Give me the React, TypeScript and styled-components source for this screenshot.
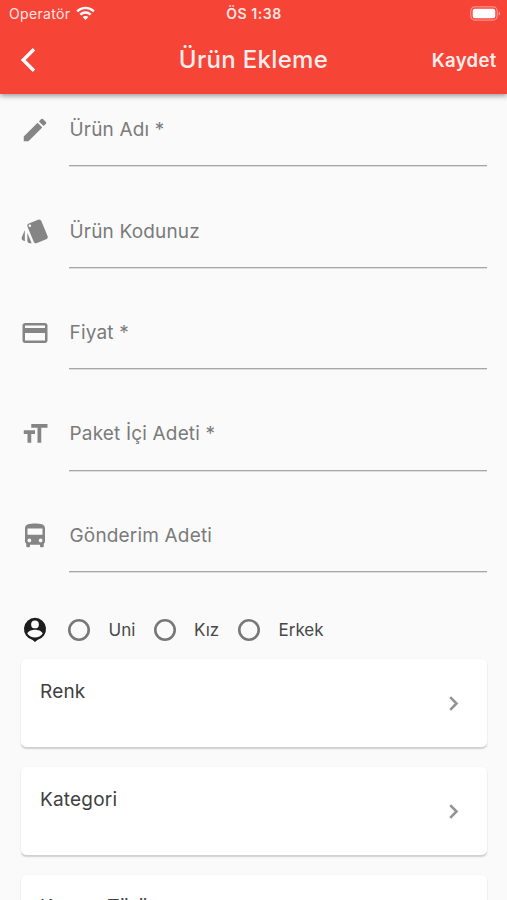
import React from 'react';
import styled, { createGlobalStyle } from 'styled-components';
import { MdEdit, MdStyle, MdCreditCard, MdFormatSize, MdDirectionsBus } from 'react-icons/md';

const GlobalStyle = createGlobalStyle`
  * { box-sizing: border-box; }
  html, body { margin: 0; padding: 0; background: #fafafa; }
  body { font-family: Inter, "Liberation Sans", sans-serif; overflow: hidden; }
`;

const Screen = styled.div`
  width: 507px;
  height: 900px;
  overflow: hidden;
  background: #fafafa;
  display: flex;
  flex-direction: column;
`;

const Header = styled.header`
  flex: none;
  height: 94px;
  background: #f64437;
  color: #fff;
  box-shadow: 0 2px 5px rgba(0, 0, 0, 0.38);
  z-index: 1;
`;

const StatusBar = styled.div`
  height: 27px;
  display: grid;
  grid-template-columns: 1fr auto 1fr;
  align-items: center;
  padding: 0 8px 0 9px;
  color: #ffe6e3;
  line-height: 27px;
`;

const Carrier = styled.div`
  display: flex;
  align-items: center;
  gap: 6px;
  font-size: 14px;
  letter-spacing: 0.32px;
`;

const Clock = styled.div`
  font-size: 14px;
  font-weight: 600;
  letter-spacing: 0.55px;
`;

const BatterySlot = styled.div`
  display: flex;
  justify-content: flex-end;
  margin-right: -2px;
`;

const NavBar = styled.div`
  height: 65px;
  display: grid;
  grid-template-columns: 1fr auto 1fr;
  align-items: center;
  padding: 0 11px 0 20px;
`;

const BackButton = styled.button`
  justify-self: start;
  display: flex;
  padding: 0;
  border: 0;
  background: none;
  color: #fff;
`;

const Title = styled.h1`
  margin: 0 9px 0 0;
  font-size: 24px;
  font-weight: 500;
  line-height: 30px;
  letter-spacing: 0.33px;
  color: #ffeeec;
`;

const SaveButton = styled.button`
  justify-self: end;
  padding: 0;
  border: 0;
  background: none;
  color: #ffeeec;
  font: 600 18.5px/24px Inter, sans-serif;
  letter-spacing: 0.3px;
  margin-right: -0.5px;
`;

const Form = styled.main`
  flex: 1;
  min-height: 0;
  padding-right: 20px;
`;

const FieldRow = styled.label`
  display: flex;
  height: 101.4px;
  padding-left: 20px;
`;

const FieldIcon = styled.span`
  width: 49px;
  padding-top: 21px;
  color: #858585;
  svg { display: block; width: 30px; height: 30px; }
`;

const FieldBody = styled.span`
  flex: 1;
  height: 72.4px;
  border-bottom: 1px solid #a6a6a6;
  box-shadow: 0 1px 0 #dedede;
`;

const FieldLabel = styled.span`
  display: block;
  padding: 22.3px 0 0 0.5px;
  font-size: 19px;
  line-height: 28px;
  letter-spacing: 0.17px;
  color: #7b7b7b;
`;

const GenderRow = styled.div`
  display: flex;
  align-items: center;
  height: 58px;
  padding-left: 20px;
`;

const PersonSlot = styled.span`
  width: 48px;
  display: flex;
`;

const RadioOption = styled.label<{ $width: number }>`
  display: flex;
  align-items: center;
  gap: 18.5px;
  width: ${p => p.$width}px;
  font-size: 17px;
  letter-spacing: 0;
  color: #484848;
`;

const RadioRing = styled.span`
  width: 22px;
  height: 22px;
  box-shadow: inset 0 0 0 2.6px #777;
  border-radius: 50%;
`;

const Cards = styled.div`
  display: flex;
  flex-direction: column;
  gap: 20.4px;
  padding-left: 21px;
`;

const Card = styled.button`
  display: flex;
  flex: none;
  justify-content: space-between;
  height: 87.7px;
  padding: 20px 27.5px 0 19px;
  border: 0;
  border-radius: 5px;
  background: #fff;
  box-shadow: 0 1.5px 1.5px rgba(0, 0, 0, 0.17), 0 0 2px rgba(0, 0, 0, 0.03);
  text-align: left;
  font: 400 19px/26px Inter, sans-serif;
  letter-spacing: 0.2px;
  color: #404040;
  svg { display: block; margin-top: 16px; }
  &:last-child { padding-top: 19px; }
`;

const WifiIcon = () => (
  <svg width="19" height="15" viewBox="0 0 19 15" fill="none" stroke="#fff" strokeWidth="2.3">
    <path d="M1.2 5.3C6 .7 13 .7 17.8 5.3" />
    <path d="M4.3 8.6C7.3 5.8 11.7 5.8 14.7 8.6" />
    <path d="M9.5 14 6.6 11.1C8.2 9.6 10.8 9.6 12.4 11.1Z" fill="#fff" stroke="none" />
  </svg>
);

const BatteryIcon = () => (
  <svg width="31" height="15" viewBox="0 0 31 15" fill="none">
    <rect x=".8" y=".9" width="26.4" height="13.2" rx="4" stroke="#fff" strokeOpacity=".42" strokeWidth="1.2" />
    <rect x="2.7" y="2.8" width="22.6" height="9.4" rx="2.2" fill="#fff" />
    <path d="M28.7 5.4c2 .8 2 3.4 0 4.2Z" fill="#fff" fillOpacity=".5" />
  </svg>
);

const BackIcon = () => (
  <svg width="16" height="26" viewBox="0 0 16 26" fill="none" stroke="currentColor" strokeWidth="3.4">
    <path d="M14 2.2 3.2 13 14 23.8" />
  </svg>
);

const PersonPinIcon = () => (
  <svg width="30" height="30" viewBox="0 0 30 30">
    <path
      fill="#1d1d1d"
      fillRule="evenodd"
      d="M15 2.8a11.2 11.2 0 0 0-2.4 22.1L15 27l2.4-2.1A11.2 11.2 0 0 0 15 2.8Zm0 2.7a3.9 3.9 0 1 1 0 7.8 3.9 3.9 0 0 1 0-7.8ZM7.3 18.6c1.2-2.8 5.1-3.8 7.7-3.8s6.5 1 7.7 3.8c-1.7 2.5-4.5 4-7.7 4s-6-1.5-7.7-4Z"
    />
  </svg>
);

const ChevronIcon = () => (
  <svg width="12" height="17" viewBox="0 0 12 17" fill="none" stroke="#949494" strokeWidth="2.6">
    <path d="M2.2 2.2 8.5 8.5 2.2 14.8" />
  </svg>
);

const fields = [
  { label: 'Ürün Adı *', Icon: MdEdit },
  { label: 'Ürün Kodunuz', Icon: MdStyle },
  { label: 'Fiyat *', Icon: MdCreditCard },
  { label: 'Paket İçi Adeti *', Icon: MdFormatSize },
  { label: 'Gönderim Adeti', Icon: MdDirectionsBus },
];

const genders = [
  { label: 'Uni', width: 85.5 },
  { label: 'Kız', width: 84.5 },
  { label: 'Erkek', width: 100 },
];

const sections = ['Renk', 'Kategori', 'Kumaş Türü'];

export default function App() {
  return (
    <Screen>
      <GlobalStyle />
      <Header>
        <StatusBar>
          <Carrier>Operatör <WifiIcon /></Carrier>
          <Clock>ÖS 1:38</Clock>
          <BatterySlot><BatteryIcon /></BatterySlot>
        </StatusBar>
        <NavBar>
          <BackButton aria-label="Geri"><BackIcon /></BackButton>
          <Title>Ürün Ekleme</Title>
          <SaveButton>Kaydet</SaveButton>
        </NavBar>
      </Header>
      <Form>
        {fields.map(({ label, Icon }) => (
          <FieldRow key={label}>
            <FieldIcon><Icon /></FieldIcon>
            <FieldBody><FieldLabel>{label}</FieldLabel></FieldBody>
          </FieldRow>
        ))}
        <GenderRow>
          <PersonSlot><PersonPinIcon /></PersonSlot>
          {genders.map(g => (
            <RadioOption key={g.label} $width={g.width}><RadioRing />{g.label}</RadioOption>
          ))}
        </GenderRow>
        <Cards>
          {sections.map(name => (
            <Card key={name}>{name}<ChevronIcon /></Card>
          ))}
        </Cards>
      </Form>
    </Screen>
  );
}
